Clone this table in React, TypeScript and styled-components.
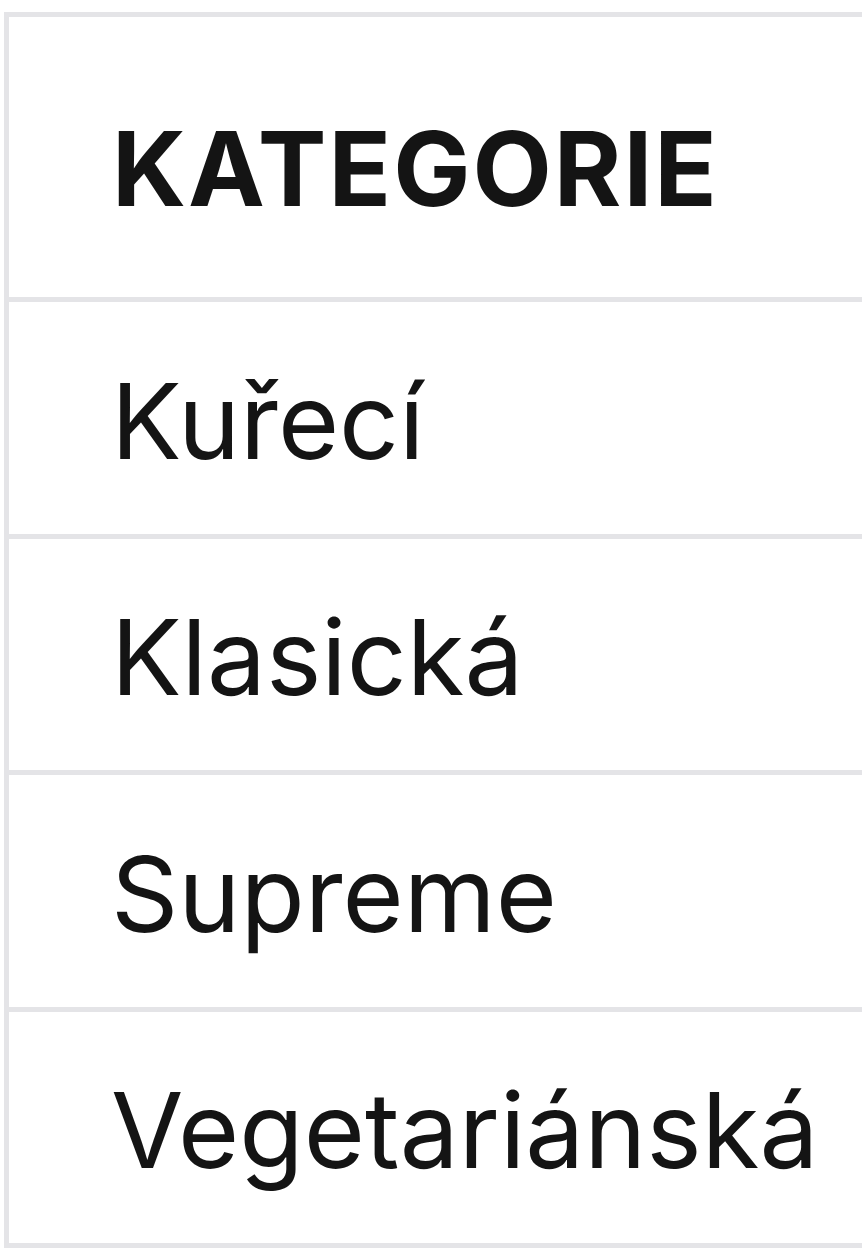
import React from "react";
import styled, { createGlobalStyle } from "styled-components";

const Global = createGlobalStyle`
  html, body { margin: 0; padding: 0; background: #ffffff; overflow: hidden; }
  body { font-family: Inter, "Noto Sans", sans-serif; }
`;

const Page = styled.div`
  width: 862px;
  height: 1248px;
  overflow: hidden;
  background: #ffffff;
  padding: 12px 0 0 4px;
  box-sizing: border-box;
`;

const Table = styled.table`
  border-collapse: separate;
  border-spacing: 0;
  width: 900px;
  border-left: 5px solid #e4e4e7;
`;

const HeadCell = styled.th`
  text-align: left;
  height: 290px;
  padding: 22px 0 0 103px;
  font-size: 103px;
  font-weight: 700;
  color: #141414;
  letter-spacing: 2px;
  border-top: 5px solid #e4e4e7;
  border-bottom: 5px solid #e4e4e7;
  box-sizing: border-box;
`;

const Cell = styled.td`
  height: 236.5px;
  padding: 5px 0 0 102px;
  font-size: 105px;
  font-weight: 400;
  color: #141414;
  border-bottom: 5px solid #e4e4e7;
  box-sizing: border-box;
`;

const rows = ["Kuřecí", "Klasická", "Supreme", "Vegetariánská"];

export default function App() {
  return (
    <>
      <Global />
      <Page>
        <Table>
          <thead>
            <tr>
              <HeadCell>KATEGORIE</HeadCell>
            </tr>
          </thead>
          <tbody>
            {rows.map((r) => (
              <tr key={r}>
                <Cell>{r}</Cell>
              </tr>
            ))}
          </tbody>
        </Table>
      </Page>
    </>
  );
}
